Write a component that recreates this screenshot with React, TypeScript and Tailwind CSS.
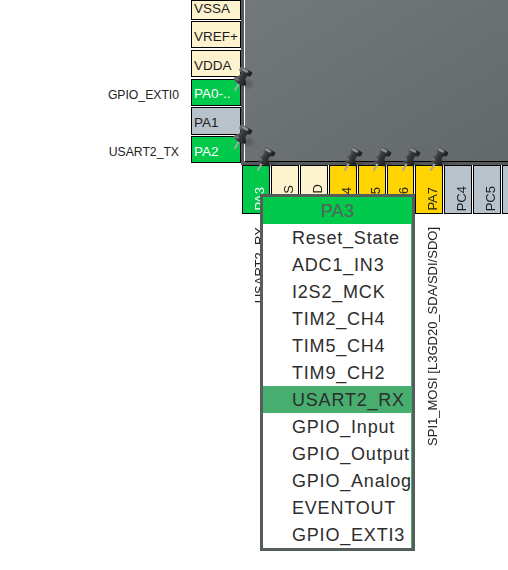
import React from 'react';

const sideRows = [
  { name: 'VSSA', label: '', kind: 'power', cls: 'h-[20px]', text: 'mt-[-3px]' },
  { name: 'VREF+', label: '', kind: 'power', cls: 'h-[27px] mt-[1px]', text: 'mt-[4px]' },
  { name: 'VDDA', label: '', kind: 'power', cls: 'h-[27px] mt-[2px]', text: 'mt-[5px]' },
  { name: 'PA0-..', label: 'GPIO_EXTI0', kind: 'green', cls: 'h-[27px] mt-[2px]', text: 'mt-[3px]' },
  { name: 'PA1', label: '', kind: 'gray', cls: 'h-[28px] mt-[1px]', text: 'mt-[4px]' },
  { name: 'PA2', label: 'USART2_TX', kind: 'green', cls: 'h-[27px] mt-[1px]', text: 'mt-[4px]' },
];

const bottomPins = [
  { name: 'PA3', kind: 'green', label: 'USART2_RX', pinned: true, width: 'w-[29px]' },
  { name: 'VSS', kind: 'power', label: '', pinned: false, width: 'w-[29px]' },
  { name: 'VDD', kind: 'power', label: '', pinned: false, width: 'w-[29px]' },
  { name: 'PA4', kind: 'yellow', label: '', pinned: true, width: 'w-[29px]' },
  { name: 'PA5', kind: 'yellow', label: '', pinned: true, width: 'w-[29px]' },
  { name: 'PA6', kind: 'yellow', label: '', pinned: true, width: 'w-[28px]' },
  { name: 'PA7', kind: 'yellow', label: 'SPI1_MOSI [L3GD20_SDA/SDI/SDO]', pinned: true, width: 'w-[29px]' },
  { name: 'PC4', kind: 'gray', label: '', pinned: false, width: 'w-[29px]' },
  { name: 'PC5', kind: 'gray', label: '', pinned: false, width: 'w-[29px]' },
  { name: '', kind: 'gray', label: '', pinned: false, width: 'w-[29px]' },
];

const signals = [
  'Reset_State',
  'ADC1_IN3',
  'I2S2_MCK',
  'TIM2_CH4',
  'TIM5_CH4',
  'TIM9_CH2',
  'USART2_RX',
  'GPIO_Input',
  'GPIO_Output',
  'GPIO_Analog',
  'EVENTOUT',
  'GPIO_EXTI3',
];

const pinColors: Record<string, string> = {
  power: 'bg-[#fdf3cf] text-[#1c1c1c]',
  green: 'bg-[#00c94c] text-white',
  gray: 'bg-[#b8c2ca] text-[#1c1c1c]',
  yellow: 'bg-[#ffd400] text-[#1c1c1c]',
};

// tip of the needle sits at (2, 27) in the viewBox
const Pushpin = () => (
  <svg width="24" height="28" viewBox="0 0 24 28" className="pointer-events-none">
    <defs>
      <linearGradient id="pinBody" x1="0" y1="0" x2="1" y2="0">
        <stop offset="0" stopColor="#7a7d7e" />
        <stop offset="0.4" stopColor="#3a3c3d" />
        <stop offset="1" stopColor="#1b1c1c" />
      </linearGradient>
      <filter id="pinShadow" x="-50%" y="-50%" width="200%" height="200%">
        <feGaussianBlur stdDeviation="1.5" />
      </filter>
    </defs>
    <ellipse cx="15" cy="21" rx="5" ry="4" fill="#2f3233" opacity="0.3" filter="url(#pinShadow)" />
    <g transform="translate(2 27) rotate(30)">
      <path d="M0 0 L0 -9" stroke="#a3a8a3" strokeWidth="2" strokeLinecap="round" />
      <path d="M-7 -9 C-7 -12 -4 -13 -3.5 -15 L-3.5 -18 L-6 -19 C-7 -20 -7 -23 -6 -24 L6 -24 C7 -23 7 -20 6 -19 L3.5 -18 L3.5 -15 C4 -13 7 -12 7 -9 C3 -6.5 -3 -6.5 -7 -9 Z" fill="url(#pinBody)" />
      <ellipse cx="-1" cy="-22" rx="3.5" ry="1.4" fill="#a0a4a5" opacity="0.8" />
      <ellipse cx="-3" cy="-10.5" rx="2" ry="1" fill="#8a8e8f" opacity="0.6" />
    </g>
  </svg>
);

const SidePin = ({ row }: { row: (typeof sideRows)[number] }) => (
  <div className={`flex items-center justify-end ${row.cls}`}>
    <span className="mr-[12px] mt-[5px] text-[12.2px] text-[#222222] whitespace-nowrap">{row.label}</span>
    <div className={`w-[50px] h-full border border-black flex items-center pl-[2px] text-[13.5px] ${pinColors[row.kind]}`}>
      <span className={`leading-none ${row.text}`}>{row.name}</span>
    </div>
  </div>
);

const BottomPin = ({ pin }: { pin: (typeof bottomPins)[number] }) => (
  <div className={`relative ${pin.width} shrink-0 flex flex-col`}>
    <div className={`mr-[1px] h-[49px] border border-black flex items-end justify-center pl-[6px] pb-[2px] text-[13px] ${pinColors[pin.kind]}`}>
      <span className="[writing-mode:vertical-rl] rotate-180 leading-none">{pin.name}</span>
    </div>
    {pin.label && (
      <span className="mt-[13px] ml-[11px] w-[13px] [writing-mode:vertical-rl] rotate-180 text-[13px] leading-none text-[#222222] whitespace-nowrap">
        {pin.label}
      </span>
    )}
    {pin.pinned && (
      <div className="absolute left-[14px] top-[-22px]">
        <Pushpin />
      </div>
    )}
  </div>
);

export default function App() {
  return (
    <div className="relative w-[508px] h-[570px] overflow-hidden bg-white font-['Liberation_Sans',Arial,sans-serif]">
      <div className="flex h-[165px]">
        <div className="w-[241px] shrink-0 flex flex-col">
          {sideRows.map((row) => (
            <SidePin key={row.name} row={row} />
          ))}
        </div>
        <div className="relative flex-1 bg-[#55595b] pl-[3px] pb-[3px]">
          <div className="h-full border-l border-b border-l-white border-b-black bg-gradient-to-br from-[#73787b] to-[#63686a]" />
          <div className="absolute left-[-8px] top-[63px]">
            <Pushpin />
          </div>
          <div className="absolute left-[-8px] top-[121px]">
            <Pushpin />
          </div>
        </div>
      </div>
      <div className="flex pl-[242px]">
        {bottomPins.map((pin, i) => (
          <BottomPin key={i} pin={pin} />
        ))}
      </div>

      <div className="absolute left-[260px] top-[194px] w-[155px] h-[357px] border-[3px] border-[#555f59] bg-white">
        <div className="h-[27px] pt-[2px] bg-[#00c94c] flex items-center justify-center text-[18px] tracking-[0.3px] text-[#55625b]">PA3</div>
        <div className="flex flex-col border-r border-[#47ae6f]">
          {signals.map((s) => (
            <div
              key={s}
              className={`h-[27px] pl-[29px] pt-[1px] flex items-center text-[18px] tracking-[0.8px] whitespace-nowrap overflow-hidden text-[#2d2d2d] ${
                s === 'USART2_RX' ? 'bg-[#47ae6f]' : ''
              }`}
            >
              {s}
            </div>
          ))}
        </div>
      </div>
    </div>
  );
}
